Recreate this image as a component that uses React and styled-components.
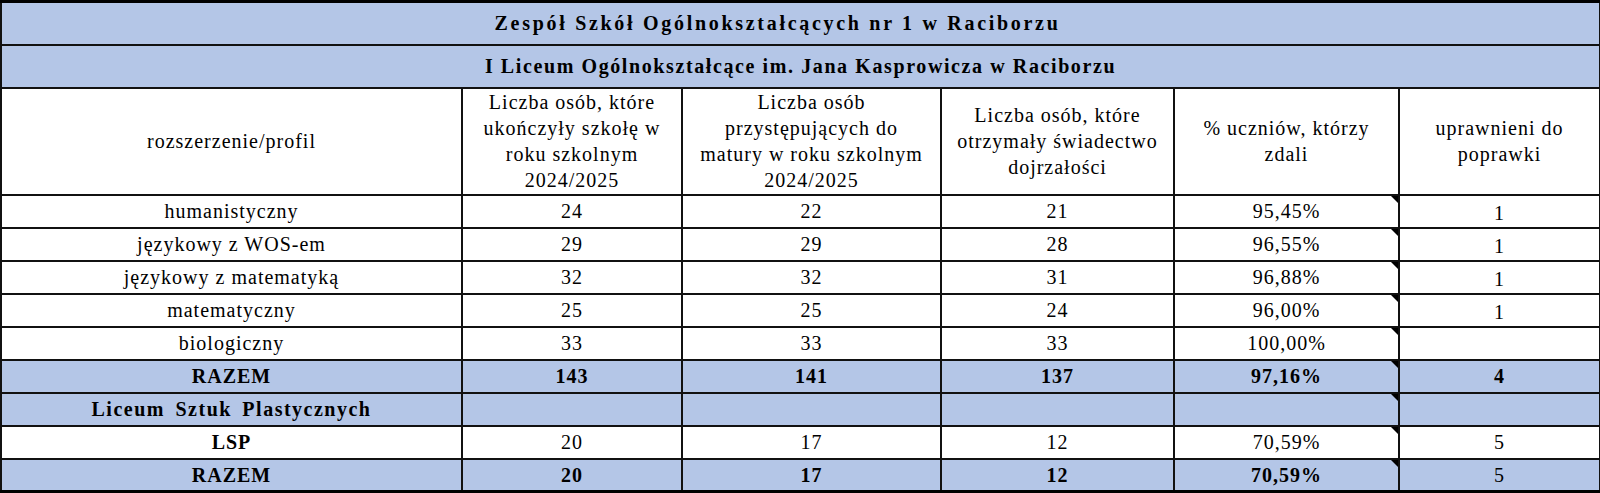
import React from "react";
import styled, { createGlobalStyle } from "styled-components";

const GlobalStyle = createGlobalStyle`
  html, body {
    margin: 0;
    padding: 0;
    background: #ffffff;
  }
  body {
    font-family: "Liberation Serif", "Times New Roman", serif;
    color: #000;
  }
`;

const Page = styled.div`
  width: 1600px;
  height: 493px;
  overflow: hidden;
  box-sizing: border-box;
`;

const Sheet = styled.table`
  width: 1599px;
  border-collapse: collapse;
  table-layout: fixed;
  font-size: 20px;
  letter-spacing: 1px;
  border-top: 3px solid #000;
  border-bottom: 3px solid #000;
`;

const TitleRow = styled.tr`
  height: 43px;
`;

const HeadRow = styled.tr`
  height: 107px;
`;

const DataRow = styled.tr`
  height: 33px;
`;

const TitleCell = styled.td`
  background: #b4c6e7;
  border: 2px solid #111;
  text-align: center;
  font-weight: bold;
  letter-spacing: ${(p) => p.$spacing || 1}px;
  padding: 0 ${(p) => p.$shift || 0}px 0 0;
`;

const HeadCell = styled.td`
  border: 2px solid #111;
  text-align: center;
  vertical-align: middle;
  line-height: 26px;
  padding: 0;
`;

const Cell = styled.td`
  position: relative;
  border: 2px solid #111;
  text-align: center;
  vertical-align: middle;
  padding: ${(p) => (p.$low ? "3px 0 0" : "0")};
  line-height: 26px;
  background: ${(p) => (p.$blue ? "#b4c6e7" : "#ffffff")};
  font-weight: ${(p) => (p.$bold ? "bold" : "normal")};

  ${(p) =>
    p.$note &&
    `
    &::after {
      content: "";
      position: absolute;
      top: 0;
      right: 0;
      border-style: solid;
      border-width: 0 7px 7px 0;
      border-color: transparent #000 transparent transparent;
    }
  `}
`;

const WideName = styled.span`
  letter-spacing: 1.5px;
  word-spacing: 4px;
`;

const rows = [
  { name: "humanistyczny", a: "24", b: "22", c: "21", pct: "95,45%", fix: "1" },
  { name: "językowy z WOS-em", a: "29", b: "29", c: "28", pct: "96,55%", fix: "1" },
  { name: "językowy z matematyką", a: "32", b: "32", c: "31", pct: "96,88%", fix: "1" },
  { name: "matematyczny", a: "25", b: "25", c: "24", pct: "96,00%", fix: "1" },
  { name: "biologiczny", a: "33", b: "33", c: "33", pct: "100,00%", fix: "" },
  { name: "RAZEM", a: "143", b: "141", c: "137", pct: "97,16%", fix: "4", blue: true, bold: true },
  { name: "Liceum Sztuk Plastycznych", a: "", b: "", c: "", pct: "", fix: "", blue: true, bold: true, wide: true },
  { name: "LSP", a: "20", b: "17", c: "12", pct: "70,59%", fix: "5", nameBold: true },
  { name: "RAZEM", a: "20", b: "17", c: "12", pct: "70,59%", fix: "5", blue: true, bold: true, fixRegular: true },
];

export default function App() {
  return (
    <Page>
      <GlobalStyle />
      <Sheet>
        <colgroup>
          <col style={{ width: 461 }} />
          <col style={{ width: 220 }} />
          <col style={{ width: 259 }} />
          <col style={{ width: 233 }} />
          <col style={{ width: 225 }} />
          <col style={{ width: 201 }} />
        </colgroup>
        <tbody>
          <TitleRow>
            <TitleCell colSpan={6} $shift={46} $spacing={2.7}>
              Zespół Szkół Ogólnokształcących nr 1 w Raciborzu
            </TitleCell>
          </TitleRow>
          <TitleRow>
            <TitleCell colSpan={6} $spacing={1.6}>
              I Liceum Ogólnokształcące im. Jana Kasprowicza w Raciborzu
            </TitleCell>
          </TitleRow>
          <HeadRow>
            <HeadCell>rozszerzenie/profil</HeadCell>
            <HeadCell>
              Liczba osób, które
              <br />
              ukończyły szkołę w
              <br />
              roku szkolnym
              <br />
              2024/2025
            </HeadCell>
            <HeadCell>
              Liczba osób
              <br />
              przystępujących do
              <br />
              matury w roku szkolnym
              <br />
              2024/2025
            </HeadCell>
            <HeadCell>
              Liczba osób, które
              <br />
              otrzymały świadectwo
              <br />
              dojrzałości
            </HeadCell>
            <HeadCell>
              % uczniów, którzy
              <br />
              zdali
            </HeadCell>
            <HeadCell>
              uprawnieni do
              <br />
              poprawki
            </HeadCell>
          </HeadRow>
          {rows.map((r, i) => (
            <DataRow key={i}>
              <Cell $blue={r.blue} $bold={r.bold || r.nameBold}>
                {r.wide ? <WideName>{r.name}</WideName> : r.name}
              </Cell>
              <Cell $blue={r.blue} $bold={r.bold}>{r.a}</Cell>
              <Cell $blue={r.blue} $bold={r.bold}>{r.b}</Cell>
              <Cell $blue={r.blue} $bold={r.bold}>{r.c}</Cell>
              <Cell $blue={r.blue} $bold={r.bold} $note>{r.pct}</Cell>
              <Cell
                $blue={r.blue}
                $bold={r.bold && !r.fixRegular}
                $low={r.fix === "1"}
              >
                {r.fix}
              </Cell>
            </DataRow>
          ))}
        </tbody>
      </Sheet>
    </Page>
  );
}
